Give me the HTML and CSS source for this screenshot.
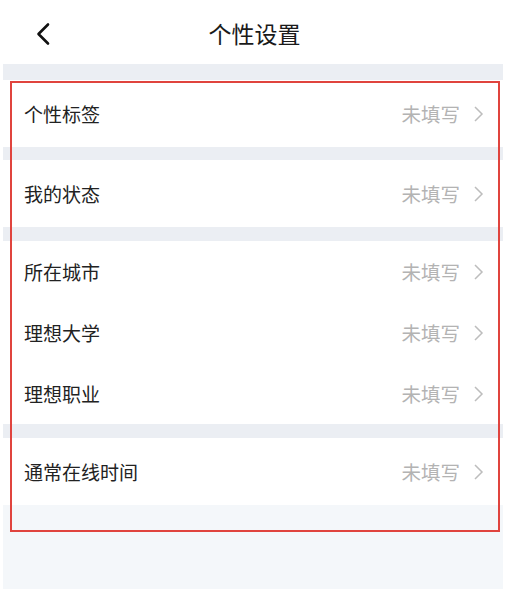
FILE: index.html
```html
<!DOCTYPE html>
<html lang="zh-CN">
<head>
<meta charset="utf-8">
<title>个性设置</title>
<link rel="stylesheet" href="styles.css">
</head>
<body>
<div class="page">
  <header class="topbar">
    <span class="back">
      <svg width="18" height="24" viewBox="0 0 18 24"><path d="M14 2.5 L4.5 12 L14 21.5" fill="none" stroke="#111" stroke-width="2.6" stroke-linecap="round" stroke-linejoin="round"/></svg>
    </span>
    <h1 class="title">个性设置</h1>
  </header>
  <main class="main">
    <div class="list">
      <section class="group">
        <div class="row tall"><span class="label">个性标签</span><span class="value">未填写<svg class="arrow" width="11" height="18" viewBox="0 0 11 18"><path d="M2 2 L9 9 L2 16" fill="none" stroke="#bdbdbd" stroke-width="1.5"/></svg></span></div>
      </section>
      <section class="group">
        <div class="row tall"><span class="label">我的状态</span><span class="value">未填写<svg class="arrow" width="11" height="18" viewBox="0 0 11 18"><path d="M2 2 L9 9 L2 16" fill="none" stroke="#bdbdbd" stroke-width="1.5"/></svg></span></div>
      </section>
      <section class="group multi">
        <div class="row"><span class="label">所在城市</span><span class="value">未填写<svg class="arrow" width="11" height="18" viewBox="0 0 11 18"><path d="M2 2 L9 9 L2 16" fill="none" stroke="#bdbdbd" stroke-width="1.5"/></svg></span></div>
        <div class="row"><span class="label">理想大学</span><span class="value">未填写<svg class="arrow" width="11" height="18" viewBox="0 0 11 18"><path d="M2 2 L9 9 L2 16" fill="none" stroke="#bdbdbd" stroke-width="1.5"/></svg></span></div>
        <div class="row"><span class="label">理想职业</span><span class="value">未填写<svg class="arrow" width="11" height="18" viewBox="0 0 11 18"><path d="M2 2 L9 9 L2 16" fill="none" stroke="#bdbdbd" stroke-width="1.5"/></svg></span></div>
      </section>
      <section class="group last">
        <div class="row tall"><span class="label">通常在线时间</span><span class="value">未填写<svg class="arrow" width="11" height="18" viewBox="0 0 11 18"><path d="M2 2 L9 9 L2 16" fill="none" stroke="#bdbdbd" stroke-width="1.5"/></svg></span></div>
      </section>
    </div>
    <div class="highlight"></div>
  </main>
</div>
</body>
</html>
```

FILE: styles.css
```css
* { box-sizing: border-box; }
html, body { margin: 0; padding: 0; background: #fff; }
body {
  font-family: "Noto Sans CJK SC", "Noto Sans", sans-serif;
  width: 509px;
  height: 589px;
  overflow: hidden;
}
.page { display: flex; flex-direction: column; height: 589px; }
.topbar {
  height: 64px;
  display: flex;
  align-items: center;
  justify-content: center;
  position: relative;
}
.back {
  position: absolute;
  left: 34px;
  top: 22px;
  display: flex;
}
.title {
  margin: 0;
  font-size: 23px;
  font-weight: 400;
  color: #1a1a1a;
  line-height: 1;
  margin-top: 2px;
}
.main {
  flex: 1;
  margin: 0 6px 0 3px;
  background: #f4f7fa;
  position: relative;
}
.list {
  background: #ebeef3;
  padding-top: 16px;
  display: flex;
  flex-direction: column;
}
.group { background: #fff; display: flex; flex-direction: column; margin-top: 14px; }
.group:first-child { margin-top: 0; }
.group:nth-child(2) { margin-top: 13px; }
.row {
  height: 61px;
  display: flex;
  align-items: center;
  justify-content: space-between;
  padding: 0 19px 0 21px;
}
.row.tall { height: 67px; }
.label { font-size: 19px; color: #222; }
.value {
  font-size: 19.5px;
  color: #b3b3b3;
  display: flex;
  align-items: center;
  gap: 13px;
}
.arrow { display: block; }
.highlight {
  position: absolute;
  left: 7px;
  right: 3px;
  top: 17px;
  height: 451px;
  border: 2px solid #e0443e;
  pointer-events: none;
}
```
